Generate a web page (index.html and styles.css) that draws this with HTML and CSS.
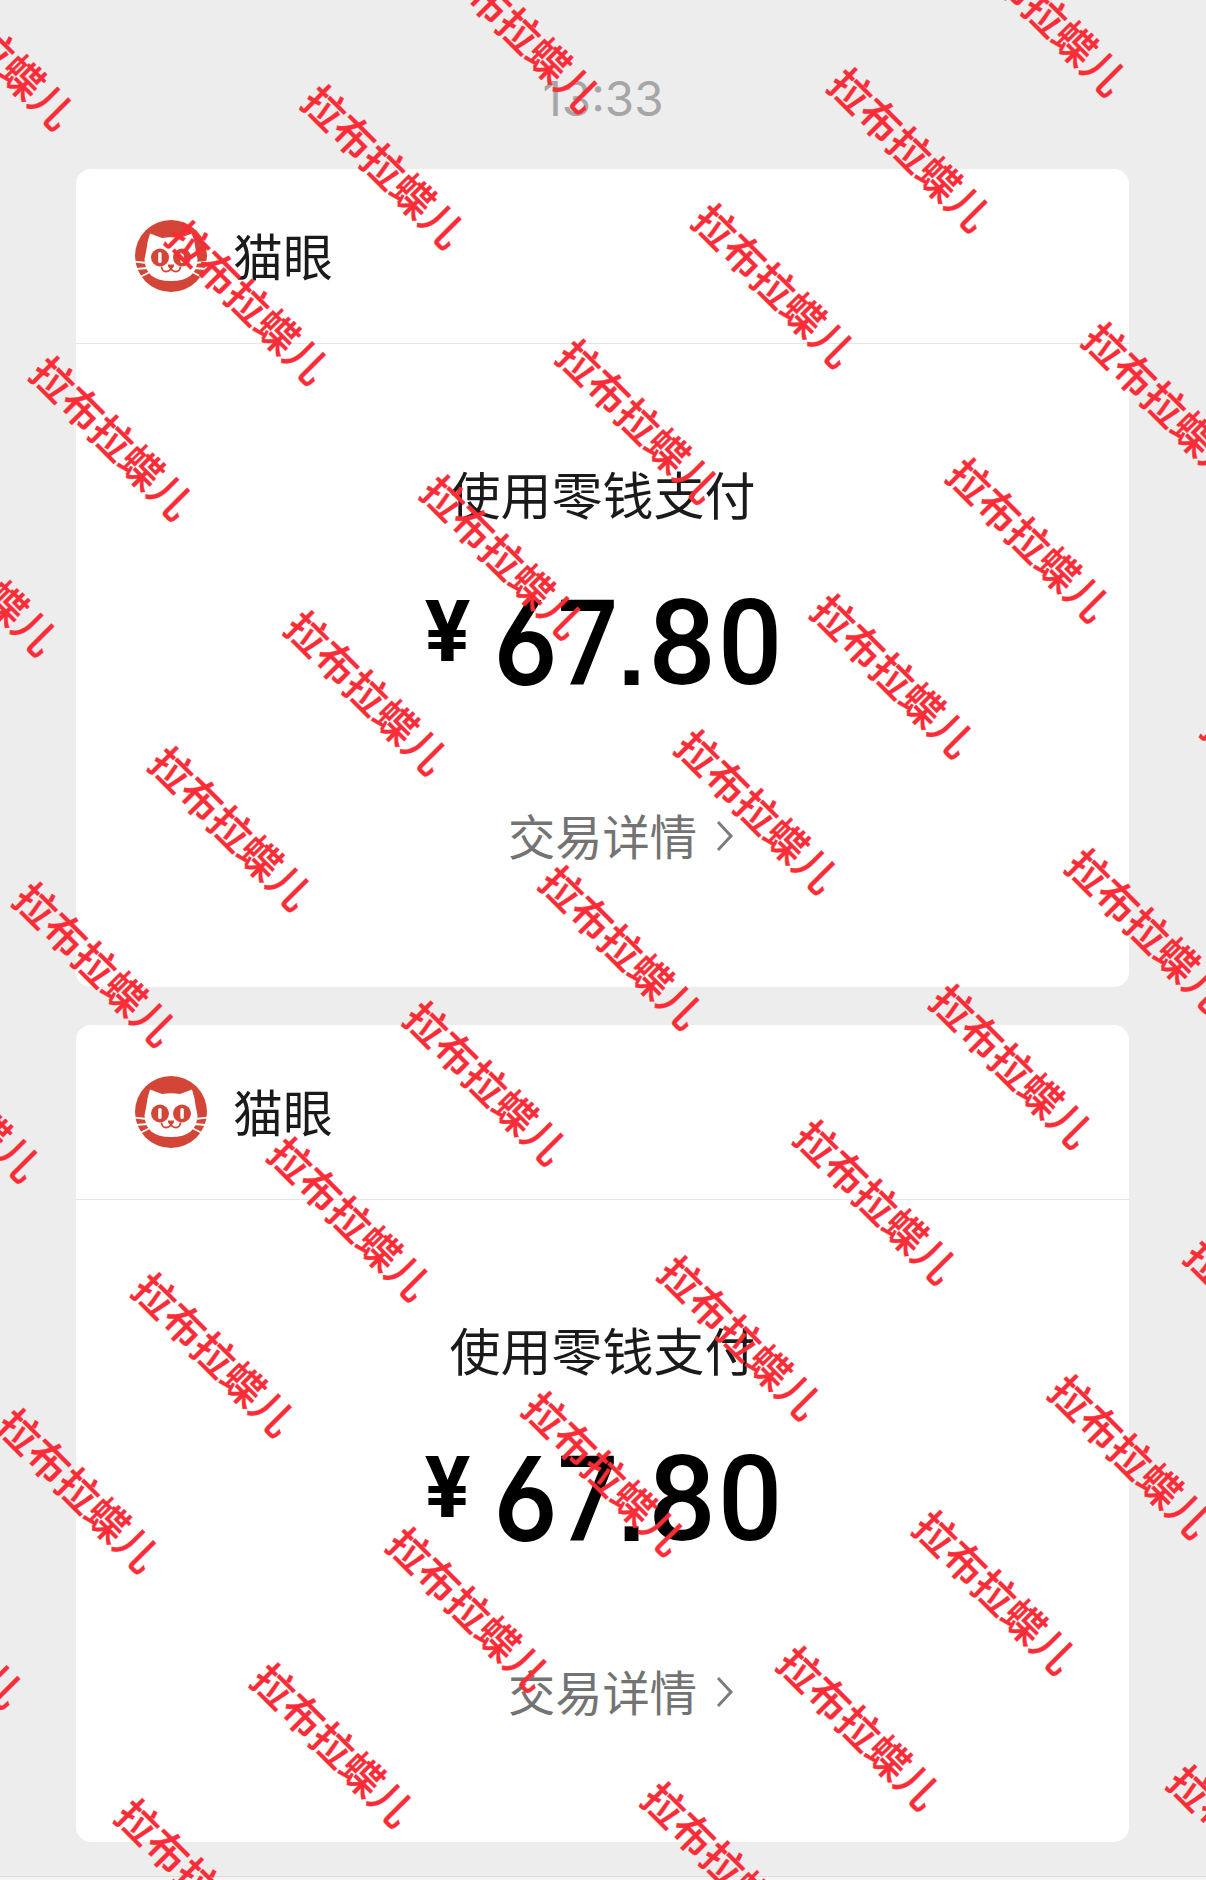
FILE: index.html
```
<!DOCTYPE html>
<html lang="zh-CN">
<head>
    <meta charset="UTF-8">
    <meta name="viewport" content="width=device-width, initial-scale=1.0">
    <title>支付凭证</title>
    <link rel="stylesheet" href="styles.css">
</head>
<body>
    <!-- Shared merchant logo -->
    <svg class="symbols" aria-hidden="true">
        <symbol id="cat-logo" viewBox="0 0 72 72">
            <circle cx="36" cy="36" r="36" fill="#d34536"/>
            <path d="M-1 41.5 12 43M1 49 13 48M6 56.5 15 52M73 41.5 60 43M71 49 59 48M66 56.5 57 52" stroke="#fff" stroke-width="1.8" fill="none"/>
            <path d="M15 13.5 27 18Q36 16.5 45 18L57 13.5Q60 22 61 32L62.5 39Q62 61 36 61 10 61 9.5 39L11 32Q12 22 15 13.5Z" fill="#fff"/>
            <circle cx="25" cy="37.5" r="9" fill="#d34536"/>
            <circle cx="47" cy="37.5" r="9" fill="#d34536"/>
            <rect x="23.2" y="32" width="3.4" height="11" rx="1.6" fill="#fff"/>
            <rect x="45.4" y="32" width="3.4" height="11" rx="1.6" fill="#fff"/>
            <path d="M33 44.5h6q.5 3-3 4.5-3.5-1.5-3-4.5z" fill="#d34536"/>
            <path d="M26.5 46.5q.5 5 4.5 5 4.5 0 5-4 .5 4 5 4 4 0 4.5-5" stroke="#d34536" stroke-width="1.8" fill="none"/>
        </symbol>
    </svg>

    <main class="chat">
        <div class="chat_time">13:33</div>

        <section class="card">
            <header class="card_header">
                <svg class="card_logo"><use href="#cat-logo"/></svg>
                <span class="card_name">猫眼</span>
            </header>
            <div class="card_body">
                <div class="pay-method">使用零钱支付</div>
                <div class="amount"><span class="amount_sign">¥</span><span class="amount_six">6</span><span class="amount_seven">7</span><span class="amount_dot">.</span><span class="amount_eight">8</span><span class="amount_zero">0</span></div>
                <div class="detail">交易详情
                    <svg class="detail_arrow" viewBox="0 0 18 32"><path d="M2 2 15 16 2 30"/></svg>
                </div>
            </div>
        </section>

        <section class="card">
            <header class="card_header">
                <svg class="card_logo"><use href="#cat-logo"/></svg>
                <span class="card_name">猫眼</span>
            </header>
            <div class="card_body">
                <div class="pay-method">使用零钱支付</div>
                <div class="amount"><span class="amount_sign">¥</span><span class="amount_six">6</span><span class="amount_seven">7</span><span class="amount_dot">.</span><span class="amount_eight">8</span><span class="amount_zero">0</span></div>
                <div class="detail">交易详情
                    <svg class="detail_arrow" viewBox="0 0 18 32"><path d="M2 2 15 16 2 30"/></svg>
                </div>
            </div>
        </section>

        <footer class="chat_bar"></footer>

        <div class="watermark"><div class="watermark_grid" id="watermark"></div></div>
    </main>

    <script src="watermark.js"></script>
</body>
</html>
```
FILE: styles.css
```
body {
    margin: 0;
    background: #ededed;
    font-family: "Noto Sans CJK SC", sans-serif;
}

.symbols {
    position: absolute;
    width: 0;
    height: 0;
}

.chat {
    position: relative;
    display: flex;
    flex-direction: column;
    box-sizing: border-box;
    height: 1880px;
    padding: 71px 77px 0 76px;
    overflow: hidden;
}

.chat_time {
    flex: none;
    height: 98px;
    padding-left: 1px;
    line-height: 56px;
    text-align: center;
    font-family: Inter, sans-serif;
    font-size: 47.5px;
    color: #a6a6a6;
}

.card {
    flex: none;
    box-sizing: border-box;
    height: 817.5px;
    margin-bottom: 38px;
    border-radius: 15px;
    background: #fff;
}

.card_header {
    display: flex;
    align-items: center;
    box-sizing: border-box;
    height: 175px;
    padding-left: 59px;
    border-bottom: 1px solid #e5e5e5;
}

.card_logo {
    width: 72px;
    height: 72px;
}

.card_name {
    margin-left: 26px;
    padding-bottom: 4px;
    font-size: 50px;
    line-height: 72px;
    color: #1a1a1a;
}

.card_body {
    display: flex;
    flex-direction: column;
    align-items: center;
    padding-top: 112px;
}

.pay-method {
    font-size: 51px;
    line-height: 74px;
    color: #1a1a1a;
}

.amount {
    display: flex;
    align-items: flex-start;
    margin: 54px 2px 0 0;
    height: 120px;
    line-height: 120px;
    text-align: center;
    font-family: Roboto, sans-serif;
    font-size: 119px;
    font-weight: 500;
    color: #000;
}

/* Every glyph sits centred in its own slot */
.amount span {
    display: flex;
    justify-content: center;
}

.amount .amount_sign {
    width: 48px;
    margin-right: 23px;
    line-height: 96px;
    font-size: 85px;
    font-weight: 700;
}

.amount .amount_six {
    width: 62px;
    line-height: 117px;
    font-family: Inter, sans-serif;
    font-size: 117px;
    font-weight: 600;
    font-feature-settings: "ss01", "cv03";
    transform: scaleX(0.91);
}

.amount .amount_seven {
    width: 62px;
    transform: scaleX(0.9);
}

.amount .amount_dot {
    width: 26px;
    font-family: "Liberation Sans", sans-serif;
    font-size: 98px;
    line-height: 135px;
    font-weight: 700;
}

.amount .amount_eight {
    width: 75px;
}

.amount .amount_zero {
    width: 60px;
    transform: scaleX(0.95);
}

.detail {
    display: flex;
    align-items: center;
    margin-top: 96px;
    padding-left: 37px;
    font-size: 47.3px;
    line-height: 70px;
    color: #737373;
}

.detail_arrow {
    width: 18px;
    height: 32px;
    margin: 2px 0 0 19px;
}

.detail_arrow path {
    fill: none;
    stroke: #7c7c7c;
    stroke-width: 3;
}

.chat_bar {
    flex: none;
    height: 10px;
    margin: -4px -77px 0 -76px;
    border-top: 1px solid #dcdcdc;
    background: #f5f5f5;
}

/* Diagonal watermark over the whole page */
.watermark {
    position: absolute;
    inset: 0;
    overflow: hidden;
    pointer-events: none;
}

.watermark_grid {
    position: absolute;
    left: 0;
    top: 0;
    display: grid;
    grid-template-columns: repeat(7, 360.1px);
    grid-auto-rows: 192px;
    place-items: center;
    transform-origin: 0 0;
    transform: rotate(45deg) translate(-151.2px, -1019.8px);
    font-size: 41.7px;
    font-weight: 500;
    line-height: 60px;
    color: #fa2c37;
    -webkit-text-stroke: 0.4px #fa2c37;
    white-space: nowrap;
}
```
FILE: watermark.js
```
const grid = document.getElementById('watermark');

// 7 columns x 13 rows covers the page once rotated
for (let i = 0; i < 7 * 13; i++) {
    const mark = document.createElement('span');
    mark.textContent = '拉布拉蝶儿';
    grid.appendChild(mark);
}
```
